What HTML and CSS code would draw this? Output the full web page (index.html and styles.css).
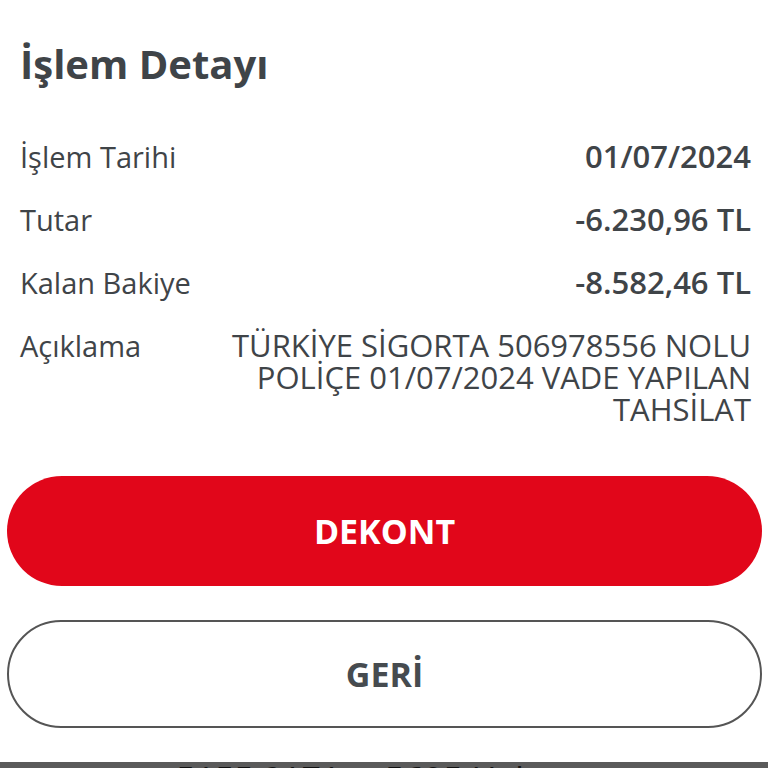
FILE: index.html
```html
<!DOCTYPE html>
<html lang="tr">
<head>
    <meta charset="UTF-8">
    <meta name="viewport" content="width=device-width, initial-scale=1.0">
    <title>İşlem Detayı</title>
    <link rel="stylesheet" href="styles.css">
</head>
<body>

<div class="detail">
    <h1 class="title">İşlem Detayı</h1>

    <div class="row">
        <div class="label">İşlem Tarihi</div>
        <div class="value">01/07/2024</div>
    </div>
    <div class="row">
        <div class="label">Tutar</div>
        <div class="value">-6.230,96 TL</div>
    </div>
    <div class="row">
        <div class="label">Kalan Bakiye</div>
        <div class="value">-8.582,46 TL</div>
    </div>
    <div class="row">
        <div class="label">Açıklama</div>
        <div class="desc">TÜRKİYE SİGORTA 506978556 NOLU POLİÇE 01/07/2024 VADE YAPILAN TAHSİLAT</div>
    </div>
</div>

<div class="button-container">
    <button class="button button-red">DEKONT</button>
    <button class="button button-line">GERİ</button>
</div>

<!-- alttaki liste, ekranda sadece ust kenari gorunuyor -->
<div class="next-strip">
    <span class="next-text">5155 0171 ... 5695 Hal</span>
    <span class="next-badge">■ ■ ■ ■ ■</span>
</div>

</body>
</html>
```

FILE: styles.css
```css
body {
    margin: 0;
    padding: 0;
    font-family: "Open Sans", "Noto Sans", sans-serif;
    background-color: white;
    color: #3f4448; /* koyu gri yazi */
    overflow: hidden;
}

.detail {
    padding: 40px 17px 0 20px;
}

.title {
    margin: 0 0 52px 0;
    font-size: 40px;
    line-height: 48px;
    font-weight: 700;
}

.row {
    display: flex;
    justify-content: space-between;
    align-items: baseline;
    margin-bottom: 30px;
}

.row:last-child {
    margin-bottom: 0;
}

.label {
    font-size: 29px;
    line-height: 32px;
}

.value {
    font-size: 31px;
    line-height: 32px;
    font-weight: 600;
}

.desc {
    max-width: 530px;
    font-size: 31px;
    line-height: 32px;
    text-align: right;
}

.button-container {
    margin-top: 51px;
    padding: 0 6px 0 7px;
    display: flex;
    flex-direction: column;
    gap: 34px;
}

.button {
    width: 100%;
    border-radius: 56px;
    font-family: "Open Sans", sans-serif;
    font-size: 34px;
    font-weight: 700;
    cursor: pointer;
}

.button-red {
    height: 110px;
    background-color: #e1061a; /* kirmizi ana buton */
    color: white;
    border: none;
}

.button-line {
    height: 108px;
    background-color: white;
    color: #464b4f;
    border: 2px solid #555;
}

.next-strip {
    margin-top: 34px;
    height: 40px;
    background-color: #5a5a5a;
    display: flex;
    justify-content: space-between;
    padding: 0 0 0 176px;
    overflow: hidden;
}

.next-text {
    margin-top: -6px;
    font-size: 34px;
    color: #111;
}

.next-badge {
    margin-top: -8px;
    font-size: 30px;
    color: #1f4a2a;
}
```
